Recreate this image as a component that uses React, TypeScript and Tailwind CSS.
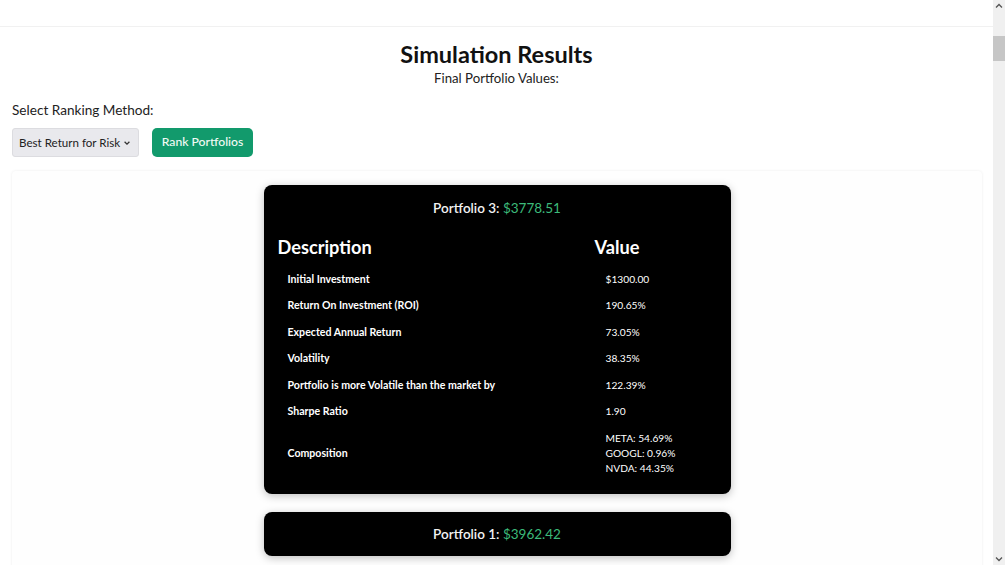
import React from "react";

const rows: { label: string; value: React.ReactNode }[] = [
  { label: "Initial Investment", value: "$1300.00" },
  { label: "Return On Investment (ROI)", value: "190.65%" },
  { label: "Expected Annual Return", value: "73.05%" },
  { label: "Volatility", value: "38.35%" },
  { label: "Portfolio is more Volatile than the market by", value: "122.39%" },
  { label: "Sharpe Ratio", value: "1.90" },
];

export default function App() {
  return (
    <div
      className="flex h-screen w-full overflow-hidden bg-white text-[#111]"
      style={{ fontFamily: "Lato, 'Open Sans', sans-serif" }}
    >
      <div className="flex min-w-0 flex-1 flex-col">
        <div className="h-[27px] shrink-0 border-b border-[#f1f1f1] bg-white" />
        <div className="flex flex-col px-[12px]">
          <h1 className="mt-[12px] text-center text-[23.5px] font-bold leading-[30px] text-[#111]">
            Simulation Results
          </h1>
          <p className="text-center text-[13.2px] leading-[18px] text-[#222]">Final Portfolio Values:</p>
          <label className="mt-[14px] text-[13.6px] leading-[18px] text-[#222]">Select Ranking Method:</label>
          <div className="mt-[9px] flex items-center gap-[13px]">
            <div className="flex h-[29px] w-[127px] items-center justify-between whitespace-nowrap rounded-[3px] border border-[#dcdce0] bg-[#e9e9ed] pl-[6px] pr-[7px] text-[11.6px] text-[#222]">
              <span>Best Return for Risk</span>
              <svg width="8" height="8" viewBox="0 0 10 10" className="mt-[1px]">
                <path d="M2 3.5 L5 6.5 L8 3.5" fill="none" stroke="#333" strokeWidth="1.6" />
              </svg>
            </div>
            <button className="flex h-[29px] w-[101px] items-center justify-center whitespace-nowrap rounded-[5px] bg-[#129a6c] text-[12.2px] font-medium text-[#f2faf5]">
              Rank Portfolios
            </button>
          </div>
          <div className="mt-[14px] mr-[-1px] flex h-[500px] flex-col items-center rounded-[4px] bg-[#fefefe] pt-[14px] shadow-[0_0_3px_rgba(0,0,0,0.08)]">
            <div className="w-[467px] rounded-[8px] bg-black px-[14px] pb-[12px] pt-[12px] shadow-[0_2px_8px_rgba(0,0,0,0.25)]">
              <div className="text-center text-[13.5px] font-semibold leading-[22px] text-[#f2f2f2]">
                Portfolio 3: <span className="font-normal text-[#3cba7a]">$3778.51</span>
              </div>
              <table className="mt-[16px] w-full border-collapse text-left text-white">
                <thead>
                  <tr>
                    <th className="w-[317px] pb-[7px] text-[18.2px] font-bold leading-[24px]">Description</th>
                    <th className="pb-[7px] text-[18.2px] font-bold leading-[24px]">Value</th>
                  </tr>
                </thead>
                <tbody className="leading-[15px]">
                  {rows.map((r) => (
                    <tr key={r.label}>
                      <td className="h-[26.5px] px-[10px] text-[10.6px] font-bold">{r.label}</td>
                      <td className="h-[26.5px] px-[11px] text-[10.2px]">{r.value}</td>
                    </tr>
                  ))}
                  <tr>
                    <td className="px-[10px] py-[6px] text-[10.6px] font-bold">Composition</td>
                    <td className="px-[11px] py-[6px] text-[10.2px]">
                      <div>META: 54.69%</div>
                      <div>GOOGL: 0.96%</div>
                      <div>NVDA: 44.35%</div>
                    </td>
                  </tr>
                </tbody>
              </table>
            </div>
            <div className="mt-[18px] w-[467px] rounded-[8px] bg-black py-[11px] shadow-[0_2px_8px_rgba(0,0,0,0.25)]">
              <div className="text-center text-[13.5px] font-semibold leading-[22px] text-[#f2f2f2]">
                Portfolio 1: <span className="font-normal text-[#3cba7a]">$3962.42</span>
              </div>
            </div>
          </div>
        </div>
      </div>
      <div className="flex w-[12px] shrink-0 flex-col items-center bg-[#f0f0f0]">
        <svg width="8" height="8" viewBox="0 0 8 8" className="mt-[2px]">
          <path d="M1 5.5 L4 2.5 L7 5.5" fill="none" stroke="#555" strokeWidth="1.3" />
        </svg>
        <div className="mt-[26px] h-[25px] w-[12px] bg-[#c6c6c6]" />
        <div className="flex-1" />
        <svg width="8" height="8" viewBox="0 0 8 8" className="mb-[2px]">
          <path d="M1 2.5 L4 5.5 L7 2.5" fill="none" stroke="#555" strokeWidth="1.3" />
        </svg>
      </div>
    </div>
  );
}
